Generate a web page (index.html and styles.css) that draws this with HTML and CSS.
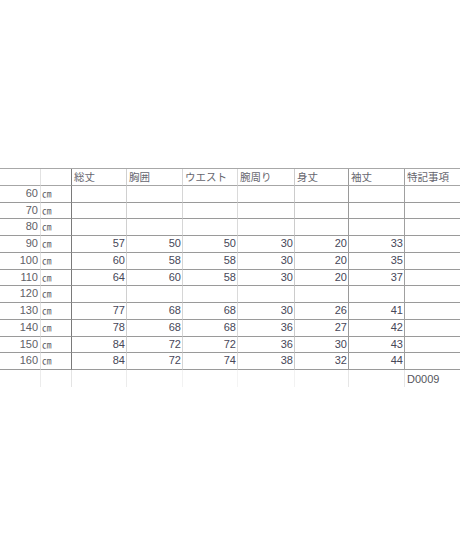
FILE: index.html
```html
<!DOCTYPE html>
<html lang="ja">
<head>
<meta charset="utf-8">
<title>サイズ表</title>
<link rel="stylesheet" href="styles.css">
</head>
<body>
<div class="sheet">
  <div class="row head">
    <div></div><div></div><div class="h">総丈</div><div class="h">胸囲</div><div class="h">ウエスト</div><div class="h">腕周り</div><div class="h">身丈</div><div class="h">袖丈</div><div class="h">特記事項</div>
  </div>
  <div class="row"><div class="n">60</div><div class="u">㎝</div><div></div><div></div><div></div><div></div><div></div><div></div><div></div></div>
  <div class="row"><div class="n">70</div><div class="u">㎝</div><div></div><div></div><div></div><div></div><div></div><div></div><div></div></div>
  <div class="row"><div class="n">80</div><div class="u">㎝</div><div></div><div></div><div></div><div></div><div></div><div></div><div></div></div>
  <div class="row"><div class="n">90</div><div class="u">㎝</div><div class="v">57</div><div class="v">50</div><div class="v">50</div><div class="v">30</div><div class="v">20</div><div class="v">33</div><div></div></div>
  <div class="row"><div class="n">100</div><div class="u">㎝</div><div class="v">60</div><div class="v">58</div><div class="v">58</div><div class="v">30</div><div class="v">20</div><div class="v">35</div><div></div></div>
  <div class="row"><div class="n">110</div><div class="u">㎝</div><div class="v">64</div><div class="v">60</div><div class="v">58</div><div class="v">30</div><div class="v">20</div><div class="v">37</div><div></div></div>
  <div class="row"><div class="n">120</div><div class="u">㎝</div><div></div><div></div><div></div><div></div><div></div><div></div><div></div></div>
  <div class="row"><div class="n">130</div><div class="u">㎝</div><div class="v">77</div><div class="v">68</div><div class="v">68</div><div class="v">30</div><div class="v">26</div><div class="v">41</div><div></div></div>
  <div class="row"><div class="n">140</div><div class="u">㎝</div><div class="v">78</div><div class="v">68</div><div class="v">68</div><div class="v">36</div><div class="v">27</div><div class="v">42</div><div></div></div>
  <div class="row"><div class="n">150</div><div class="u">㎝</div><div class="v">84</div><div class="v">72</div><div class="v">72</div><div class="v">36</div><div class="v">30</div><div class="v">43</div><div></div></div>
  <div class="row"><div class="n">160</div><div class="u">㎝</div><div class="v">84</div><div class="v">72</div><div class="v">74</div><div class="v">38</div><div class="v">32</div><div class="v">44</div><div></div></div>
  <div class="row tail"><div></div><div></div><div></div><div></div><div></div><div></div><div></div><div></div><div class="code">D0009</div></div>
</div>
</body>
</html>
```
FILE: styles.css
```css
html, body {
  margin: 0;
  padding: 0;
  background: #ffffff;
}

body {
  font-family: "Liberation Sans", "Noto Sans CJK JP", sans-serif;
  font-size: 11px;
  color: #44444e;
}

.sheet {
  margin-top: 168px;
  width: 460px;
  display: grid;
  grid-template-columns: 41px 31px 55px 56px 55px 57px 54px 56px 56px;
  grid-template-rows: repeat(12, 16.75px) 17px;
  border-top: 1px solid #a8a8a8;
}

.row {
  display: contents;
}

.row > div {
  box-sizing: border-box;
  border-bottom: 1px solid #9a9a9a;
  border-right: 1px solid #cfcfcf;
  line-height: 15px;
  white-space: nowrap;
  overflow: hidden;
}

.row > div:nth-child(1) { border-right-color: #e2e2e2; }
.row > div:nth-child(2) { border-right-color: #7a7a7a; }
.row > div:nth-child(3) { border-right-color: #d0d0d0; }
.row > div:nth-child(4) { border-right-color: #d6d6d6; }
.row > div:nth-child(5) { border-right-color: #dadada; }
.row > div:nth-child(6) { border-right-color: #cccccc; }
.row > div:nth-child(7) { border-right-color: #9a9a9a; }
.row > div:nth-child(8) { border-right-color: #a0a0a0; }
.row > div:nth-child(9) { border-right: none; }

.head > div {
  border-bottom-color: #a6a6a6;
}

.h {
  font-family: "Noto Sans CJK JP", sans-serif;
  font-size: 10.5px;
  color: #66666e;
  padding-left: 2px;
  line-height: 15px;
}

.n {
  text-align: right;
  padding-right: 2px;
  color: #606066;
}

.u {
  font-family: "Noto Sans CJK JP", sans-serif;
  font-size: 9.5px;
  color: #606066;
  padding-left: 1px;
}

.v {
  text-align: right;
  padding-right: 1px;
  color: #474758;
}

.tail > div {
  border-bottom: none;
}

.tail > div:nth-child(1) { border-right-color: #ececec; }
.tail > div:nth-child(2) { border-right-color: #e4e4e4; }
.tail > div:nth-child(3) { border-right-color: #ececec; }
.tail > div:nth-child(4) { border-right-color: #f2f2f2; }
.tail > div:nth-child(5) { border-right-color: #f4f4f4; }
.tail > div:nth-child(6) { border-right-color: #f2f2f2; }
.tail > div:nth-child(7) { border-right-color: #e6e6e6; }
.tail > div:nth-child(8) { border-right-color: #e6e6e6; }

.code {
  padding-left: 2px;
  padding-top: 2px;
  color: #55555c;
}
```
